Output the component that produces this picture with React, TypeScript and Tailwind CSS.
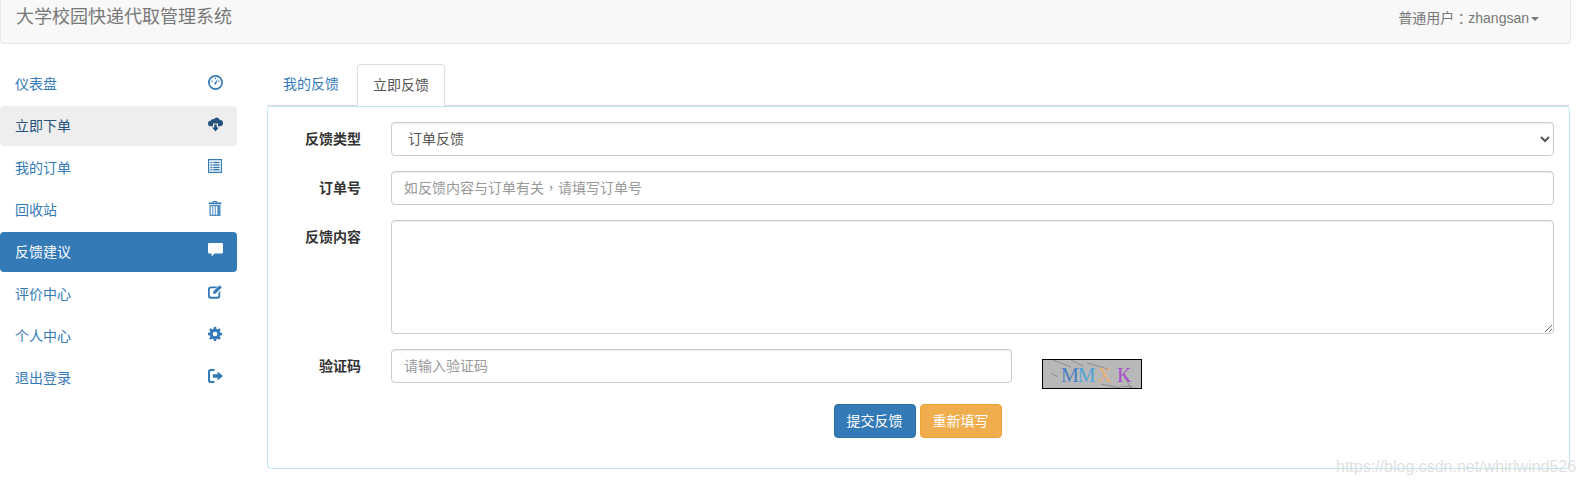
const FONT = "font-['Liberation_Sans','Noto_Sans_CJK_SC',sans-serif]";

const Dashboard = () => (
  <svg width="15" height="15" viewBox="0 0 14 14" fill="currentColor">
    <path fillRule="evenodd" d="M7 0a7 7 0 1 1 0 14A7 7 0 0 1 7 0Zm0 1.6a5.4 5.4 0 1 0 0 10.800A5.400 5.400 0 0 0 7 1.600Z" />
    <rect x="6.400" y="2.600" width="1.200" height="1.400" />
    <rect x="3.200" y="5.200" width="1.300" height="1.100" />
    <rect x="9.500" y="5.200" width="1.300" height="1.100" />
    <path d="M9.200 3.800 7.800 7.600a1 1 0 1 1-1.500-.5Z" />
  </svg>
);
const CloudDown = () => (
  <svg width="15" height="15" viewBox="0 0 15 15" fill="currentColor">
    <path d="M8.500 0.500a3.600 3.600 0 0 1 3.400 2.600A3 3 0 0 1 15 6.100 3 3 0 0 1 12 9.300H10V6.500H5v2.800H2.800A2.800 2.800 0 0 1 0 6.500a2.800 2.800 0 0 1 2.600-2.800A3.200 3.200 0 0 1 5.100 2.100c.5 0 .8.100 1 .2A3.600 3.600 0 0 1 8.500 0.500Z" />
    <path d="M6.200 7.500h2.600v3h2.100l-3.400 4-3.400-4h2.100Z" />
  </svg>
);
const ListAlt = () => (
  <svg width="14" height="14" viewBox="0 0 14 14" fill="currentColor">
    <path fillRule="evenodd" d="M0 0h14v14H0Zm1.200 1.200v11.600h11.600V1.200Z" />
    <rect x="2.400" y="2.800" width="2" height="1.400" />
    <rect x="5.200" y="2.800" width="6.400" height="1.400" />
    <rect x="2.400" y="5.300" width="2" height="1.400" />
    <rect x="5.200" y="5.300" width="6.400" height="1.400" />
    <rect x="2.400" y="7.800" width="2" height="1.400" />
    <rect x="5.200" y="7.800" width="6.400" height="1.400" />
    <rect x="2.400" y="10" width="2" height="1.400" />
    <rect x="5.200" y="10" width="6.400" height="1.400" />
  </svg>
);
const Trash = () => (
  <svg width="14" height="15" viewBox="0 0 14 15" fill="currentColor">
    <path fillRule="evenodd" d="M5 0h4l.6 1.400H13.400V3.200H.6V1.400H4.400ZM5.500.9 5.300 1.400h3.400L8.500.9Z" />
    <path fillRule="evenodd" d="M1.500 4h11v11h-11Zm1.300 1.200v8.600h1.500V5.200Zm2.500 0v8.600h1.500V5.200Zm2.500 0v8.600h1.500V5.200Z" opacity="0.85" />
  </svg>
);
const Comment = () => (
  <svg width="15" height="14" viewBox="0 0 15 14" fill="currentColor">
    <path d="M1.200 0h12.600A1.200 1.200 0 0 1 15 1.200v8.100a1.200 1.200 0 0 1-1.200 1.200H6.600L3.600 13.600v-3.100H1.200A1.200 1.200 0 0 1 0 9.300V1.200A1.200 1.200 0 0 1 1.200 0Z" />
  </svg>
);
const Edit = () => (
  <svg width="14" height="14" viewBox="0 0 14 14" fill="currentColor">
    <path d="M2.800 1.400h6.800L8 3.200H3a1.200 1.200 0 0 0-1.200 1.200v6.200c0 .7.500 1.200 1.200 1.200h6.200c.7 0 1.200-.5 1.200-1.200V7.800l1.800-1.800v5A2.800 2.800 0 0 1 9.400 13.800H2.800A2.800 2.800 0 0 1 0 11V4.200a2.800 2.800 0 0 1 2.800-2.800Z" />
    <path d="M11.600.2 13.800 2.400 7.400 8.800H5.200V6.600Z" />
  </svg>
);
const Cog = () => (
  <svg width="14" height="14" viewBox="0 0 14 14" fill="currentColor">
    <path fillRule="evenodd" d="M5.800 0h2.400l.3 1.900 1.100.5L11.200 1.200 12.800 2.800 11.700 4.400l.4 1.100L14 5.800v2.400l-1.900.3-.4 1.100 1.100 1.600-1.600 1.600-1.600-1.100-1.100.4L8.200 14H5.800l-.3-1.900-1.100-.4-1.600 1.100-1.600-1.600 1.100-1.600-.4-1.100L0 8.200V5.800l1.900-.3.4-1.100L1.200 2.800 2.800 1.200l1.600 1.200 1.100-.5ZM7 4.700a2.300 2.300 0 1 0 0 4.600 2.300 2.300 0 0 0 0-4.600Z" />
  </svg>
);
const LogOut = () => (
  <svg width="15" height="14" viewBox="0 0 15 14" fill="currentColor">
    <path d="M2.800 0H6.500v2H3.200a1.200 1.200 0 0 0-1.200 1.200v7.600c0 .7.500 1.200 1.200 1.200h3.300v2H2.800A2.800 2.800 0 0 1 0 11.200V2.800A2.800 2.800 0 0 1 2.800 0Z" />
    <path d="M9.500 2.500 15 7l-5.500 4.500V8.800H4.800V5.200h4.700Z" />
  </svg>
);

const items = [
  { label: "仪表盘", icon: <Dashboard /> },
  { label: "立即下单", icon: <CloudDown />, hover: true },
  { label: "我的订单", icon: <ListAlt /> },
  { label: "回收站", icon: <Trash /> },
  { label: "反馈建议", icon: <Comment />, active: true },
  { label: "评价中心", icon: <Edit /> },
  { label: "个人中心", icon: <Cog /> },
  { label: "退出登录", icon: <LogOut /> },
];

const field =
  "w-full bg-white border border-[#ccc] rounded-[4px] shadow-[inset_0_1px_1px_rgba(0,0,0,0.075)] text-[14px] text-[#555] outline-none placeholder:text-[#999]";
const inputFont = "font-['Liberation_Sans','Noto_Sans_CJK_TC',sans-serif]";

function Row({ label, children, className }: { label: string; children: React.ReactNode; className?: string }) {
  return (
    <div className={`flex ${className ?? ""}`}>
      <label className="w-[123px] shrink-0 pt-[7px] pr-[30px] text-right text-[14px] leading-[20px] font-bold text-[#333]">
        {label}
      </label>
      {children}
    </div>
  );
}

export default function App() {
  return (
    <div className={`${FONT} relative h-[487px] w-[1585px] overflow-hidden bg-white text-[14px] text-[#333]`}>
      <header className="flex h-[44px] w-[1571px] items-start justify-between rounded-b-[4px] border border-t-0 border-[#e7e7e7] bg-[#f8f8f8] pl-[15px] pr-[31px] text-[#777]">
        <span className="text-[18px] leading-[34px]">大学校园快递代取管理系统</span>
        <span className="flex items-center pt-[8px] text-[14px] leading-[20px]">
          普通用户<span className="font-['Noto_Sans_CJK_TC',sans-serif]">：</span>zhangsan
          <span className="ml-[2px] mt-[1px] h-0 w-0 border-x-[4px] border-t-[4px] border-x-transparent border-t-[#777]" />
        </span>
      </header>

      <div className="flex pt-[20px]">
        <nav className="flex w-[237px] shrink-0 flex-col gap-[2px]">
          {items.map((it) => (
            <a
              key={it.label}
              className={`flex h-[40px] items-center justify-between rounded-[4px] pl-[15px] pr-[14px] text-[14px] ${
                it.active
                  ? "bg-[#337ab7] text-white"
                  : it.hover
                    ? "bg-[#eee] text-[#23527c]"
                    : "text-[#337ab7]"
              }`}
            >
              <span className="pt-[1px]">{it.label}</span>
              <span className="mb-[4px] flex w-[16px] justify-center">{it.icon}</span>
            </a>
          ))}
        </nav>

        <main className="ml-[30px] w-[1303px]">
          <div className="flex h-[42px] items-start border-b border-[#ddd]">
            <a className="flex h-[41px] w-[88px] items-center justify-center text-[#337ab7]">我的反馈</a>
            <a className="relative z-10 ml-[2px] flex h-[42px] w-[88px] items-center justify-center rounded-t-[4px] border border-b-0 border-[#ddd] bg-white text-[#555]">
              立即反馈
            </a>
          </div>
          <section className="h-[363px] rounded-[4px] border border-[#bce8f1] pr-[15px] pt-[15px]">
            <Row label="反馈类型">
              <select className={`${field} h-[34px] pl-[12px] pr-[2px]`} defaultValue="订单反馈">
                <option>订单反馈</option>
              </select>
            </Row>
            <Row label="订单号" className="mt-[15px]">
              <input className={`${field} ${inputFont} h-[34px] px-[12px]`} placeholder="如反馈内容与订单有关，请填写订单号" />
            </Row>
            <Row label="反馈内容" className="mt-[15px]">
              <textarea className={`${field} block h-[114px] px-[12px] py-[6px]`} />
            </Row>
            <Row label="验证码" className="mt-[15px]">
              <input className={`${field} h-[34px] !w-[621px] px-[12px]`} placeholder="请输入验证码" />
              <div className="relative ml-[30px] mt-[10px] h-[30px] w-[100px] overflow-hidden border border-black bg-[#b8b8b8] font-['Liberation_Serif',serif] text-[20px] leading-[30px]">
                <svg className="absolute inset-0" width="98" height="28" viewBox="0 0 98 28" fill="none" stroke="#666" strokeWidth="0.5">
                  <path d="M10 0 28 7M28 0 40 6M44 3 65 9M8 13 15 17M58 24 78 28M78 26 90 27M82 18 88 28" />
                </svg>
                <span className="relative flex pl-[18px] tracking-[-1px]">
                  <span className="text-[#4a7fc4]">M</span>
                  <span className="text-[#4fa3d8]">M</span>
                  <span className="ml-[3px] text-[#e8b27c]">X</span>
                  <span className="ml-[6px] text-[#a94fc9]">K</span>
                </span>
              </div>
            </Row>
            <div className="mt-[15px] flex justify-center gap-[4px] pl-[13px]">
              <button className="h-[34px] w-[82px] rounded-[4px] border border-[#2e6da4] bg-[#337ab7] text-white">提交反馈</button>
              <button className="h-[34px] w-[82px] rounded-[4px] border border-[#eea236] bg-[#f0ad4e] text-white">重新填写</button>
            </div>
          </section>
        </main>
      </div>

      <span className="absolute left-[1336px] top-[457px] whitespace-nowrap text-[16px] leading-[20px] text-[#d8d8d8]/80">
        https://blog.csdn.net/whirlwind526
      </span>
    </div>
  );
}
